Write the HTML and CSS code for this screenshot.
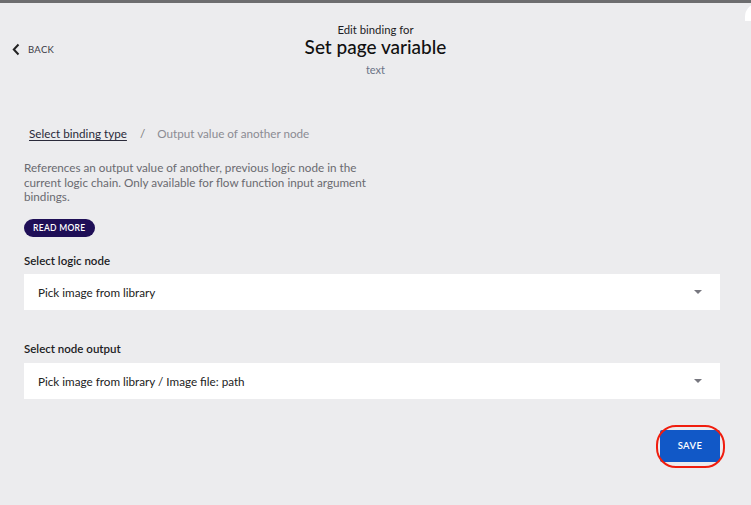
FILE: index.html
```html
<!DOCTYPE html>
<html>
<head>
<meta charset="utf-8">
<link rel="stylesheet" href="styles.css">
</head>
<body>
<div class="topbar"></div>
<div class="corner"></div>
<header class="header">
  <a class="back" href="#">
    <svg width="8" height="12" viewBox="0 0 8 12"><path d="M6.5 1 L1.8 6 L6.5 11" fill="none" stroke="#222" stroke-width="2"/></svg>
    <span>BACK</span>
  </a>
  <div class="titles">
    <div class="pre">Edit binding for</div>
    <div class="title">Set page variable</div>
    <div class="sub">text</div>
  </div>
</header>
<main class="content">
  <nav class="crumbs">
    <a class="crumb-link" href="#">Select binding type</a>
    <span class="sep">/</span>
    <span class="crumb-current">Output value of another node</span>
  </nav>
  <p class="desc">References an output value of another, previous logic node in the current logic chain. Only available for flow function input argument bindings.</p>
  <button class="readmore">READ MORE</button>
  <div class="field">
    <label class="label">Select logic node</label>
    <div class="select"><span>Pick image from library</span><span class="caret"></span></div>
  </div>
  <div class="field">
    <label class="label">Select node output</label>
    <div class="select"><span>Pick image from library / Image file: path</span><span class="caret"></span></div>
  </div>
  <div class="actions">
    <button class="save">SAVE</button>
  </div>
</main>
</body>
</html>
```
FILE: styles.css
```css
* { box-sizing: border-box; }
html, body { margin: 0; padding: 0; }
body {
  width: 751px;
  height: 505px;
  overflow: hidden;
  background: #ececee;
  font-family: Lato, "Open Sans", sans-serif;
  color: #1c1c24;
  position: relative;
}
.topbar { height: 3px; background: #6d6d6f; }
.corner {
  position: absolute;
  right: -12px;
  top: 3px;
  width: 18px;
  height: 18px;
  background: #fff;
  border-top-left-radius: 14px;
}
.header {
  position: relative;
  height: 90px;
  display: flex;
  justify-content: center;
}
.back {
  position: absolute;
  left: 12px;
  top: 40px;
  display: flex;
  align-items: center;
  gap: 8px;
  text-decoration: none;
  color: #3a3a44;
  font-size: 9.5px;
  letter-spacing: 0.3px;
}
.back svg { width: 8px; height: 13px; }
.titles { text-align: center; padding-top: 20px; }
.pre { font-size: 11.3px; color: #1c1c24; line-height: 13px; }
.title { font-size: 19px; font-weight: 500; line-height: 22px; margin-top: 0; color: #111; }
.sub { font-size: 11px; color: #6a7386; line-height: 13px; margin-top: 5px; }
.content { padding: 33px 31px 0 24px; }
.crumbs { font-size: 11.7px; padding-left: 5px; display: flex; line-height: 14px; }
.crumb-link { color: #2a2a3a; text-decoration: underline; text-underline-offset: 2px; }
.sep { color: #777; margin: 0 12px 0 13px; }
.crumb-current { color: #8b8b93; }
.desc {
  margin: 20px 0 0;
  width: 350px;
  font-size: 11.7px;
  line-height: 14.5px;
  color: #6a6a70;
}
.readmore {
  display: block;
  margin-top: 15px;
  height: 18px;
  padding: 0 9px;
  border: 0;
  border-radius: 9px;
  background: #1f0f57;
  color: #fff;
  font-family: inherit;
  font-size: 8.5px;
  font-weight: 600;
  letter-spacing: 0.3px;
}
.field { margin-top: 17px; }
.field + .field { margin-top: 32px; }
.label { display: block; font-size: 11.5px; font-weight: 600; color: #1c1c24; line-height: 14px; }
.select {
  margin-top: 6px;
  height: 36px;
  background: #fff;
  display: flex;
  align-items: center;
  justify-content: space-between;
  padding: 0 18px 0 14px;
  font-size: 11.7px;
  color: #222;
}
.field + .field .select { margin-top: 7px; }
.caret {
  width: 0; height: 0;
  border-left: 4px solid transparent;
  border-right: 4px solid transparent;
  border-top: 4px solid #77777f;
}
.actions { display: flex; justify-content: flex-end; margin-top: 31px; }
.save {
  position: relative;
  width: 60px;
  height: 32px;
  border: 0;
  border-radius: 2px;
  background: #1158c7;
  color: #fff;
  font-family: inherit;
  font-size: 9.5px;
  font-weight: 600;
  letter-spacing: 0.4px;
}
.save::after {
  content: "";
  position: absolute;
  left: -4px; top: -5px; right: -5px; bottom: -6px;
  border: 2.5px solid #f01d0e;
  border-radius: 20px;
}
```
